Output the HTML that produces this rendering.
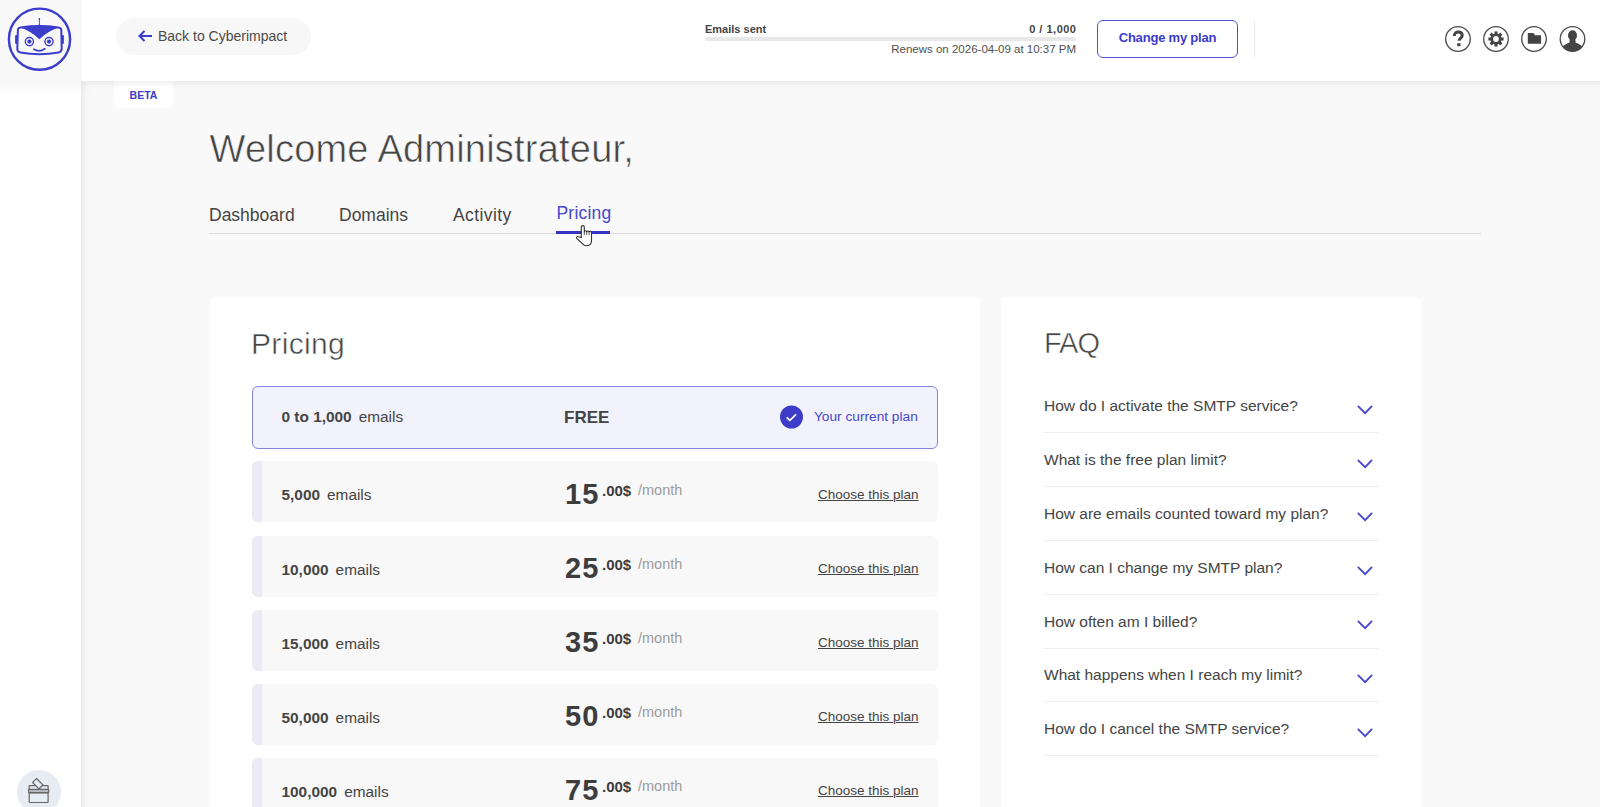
<!DOCTYPE html>
<html><head><meta charset="utf-8">
<style>
*{box-sizing:border-box;margin:0;padding:0}
html,body{width:1600px;height:807px;overflow:hidden;background:#f9f9f9;font-family:"Liberation Sans",sans-serif;color:#444}
.abs{position:absolute}
.t{position:absolute;white-space:nowrap;line-height:1}
#side{left:0;top:0;width:81px;height:807px;background:#fff}
#logoarea{left:0;top:0;width:81px;height:81px;background:#f8f8f8}
#logoshadow{left:0;top:81px;width:81px;height:13px;background:linear-gradient(#f6f6f6,#fff)}
#header{left:82px;top:0;width:1518px;height:81px;background:#fff}
#main{left:81px;top:81px;width:1519px;height:726px;background:#f9f9f9}
#mainshadow{left:81px;top:81px;width:1519px;height:726px;box-shadow:inset 7px 7px 10px -7px rgba(0,0,0,0.12)}
#back{left:116px;top:18px;width:195px;height:37px;border-radius:19px;background:#f7f7f7}
#btn{left:1097px;top:20px;width:141px;height:38px;border:1.5px solid #5151d6;border-radius:6px;background:#fff}
.hicon{position:absolute;top:26px;width:26px;height:26px}
#beta{left:114px;top:81px;width:59px;height:27px;background:#fff;border-radius:0 0 5px 5px}
.card{position:absolute;background:#fff;border-radius:5px}
.row{position:absolute;left:252px;width:686px;height:61.3px;background:#f8f8f8;border-radius:6px;overflow:hidden}
.row .bar{position:absolute;left:0;top:0;width:10px;height:100%;background:#ebebf5}
.faqline{position:absolute;left:1044px;width:335px;height:1px;background:#efefef}
</style></head>
<body>
<div id="side" class="abs"></div>
<div id="logoarea" class="abs"></div>
<div id="logoshadow" class="abs"></div>
<div id="header" class="abs"></div>
<div id="main" class="abs"></div>

<!-- logo -->
<svg class="abs" style="left:0;top:0" width="80" height="80" viewBox="0 0 80 80">
  <g fill="none" stroke="#3d3dcc">
    <circle cx="39.5" cy="39.2" r="30.6" stroke-width="2.4"/>
    <path d="M17.9 30.2Q17.7 27.8 20.6 27.4Q39.4 24.6 58.4 27.4Q61.3 27.8 61.3 30.2L61.7 48.6Q61.8 51.9 58.6 52.5Q39.4 56 20.4 52.5Q17.2 51.9 17.3 48.6Z" stroke-width="2"/>
    <circle cx="29.4" cy="41.6" r="4.1" stroke-width="1.4"/>
    <circle cx="49" cy="41.6" r="4.1" stroke-width="1.4"/>
    <path d="M33.9 49.2Q39.4 52.6 44.8 48.8" stroke-width="1.7" stroke-linecap="round"/>
    <path d="M39.4 18.5V25" stroke-width="0.9"/>
  </g>
  <g fill="#3d3dcc">
    <path d="M19.5 27.5Q39.4 24.6 59.5 27.5Q48.5 30.5 39.4 39.2Q30.3 30.5 19.5 27.5Z"/>
    <path d="M37.8 26Q39.4 23.2 41 26Z"/>
    <ellipse cx="39.4" cy="19" rx="0.8" ry="1.1"/>
    <circle cx="29.4" cy="41.6" r="2.1"/>
    <circle cx="49" cy="41.6" r="2.1"/>
    <rect x="15.1" y="35.1" width="2.6" height="8.8" rx="0.8"/>
    <rect x="61.3" y="35.1" width="2.6" height="8.8" rx="0.8"/>
  </g>
</svg>

<!-- header -->
<div id="back" class="abs"></div>
<svg class="abs" style="left:137px;top:29px" width="16" height="14" viewBox="0 0 16 14"><path d="M15 7H2.5M7.5 2L2.5 7L7.5 12" fill="none" stroke="#3b3bcc" stroke-width="2"/></svg>
<div class="t" style="left:158px;top:29px;font-size:14px;color:#4a4a4a">Back to Cyberimpact</div>

<div class="t" style="left:705px;top:24px;font-size:11px;font-weight:bold;color:#444">Emails sent</div>
<div class="t" style="left:990px;top:24px;width:86px;text-align:right;font-size:11px;font-weight:bold;color:#444;letter-spacing:0.5px;margin-left:0.5px">0 / 1,000</div>
<div class="abs" style="left:705px;top:37px;width:371px;height:3.5px;border-radius:2px;background:#e8e8e8"></div>
<div class="t" style="left:860px;top:44px;width:216px;text-align:right;font-size:11.5px;color:#505050">Renews on 2026-04-09 at 10:37 PM</div>

<div id="btn" class="abs"></div>
<div class="t" style="left:1097px;top:31px;width:141px;text-align:center;font-size:13px;font-weight:bold;color:#3b3bcc;letter-spacing:-0.2px">Change my plan</div>
<div class="abs" style="left:1254px;top:20px;width:1px;height:37px;background:#e8e8e8"></div>

<!-- header icons -->
<svg class="abs" style="left:1444px;top:25px" width="28" height="28" viewBox="0 0 28 28">
  <circle cx="14" cy="14" r="12.3" fill="none" stroke="#4a4a4a" stroke-width="1.3"/>
  <path d="M10.3 10.9c0-2.5 1.7-3.9 4-3.9c2.3 0 3.9 1.4 3.9 3.4c0 2.5-3.2 2.8-3.2 5.4" fill="none" stroke="#444" stroke-width="3"/>
  <rect x="13.2" y="18.2" width="3.3" height="3" fill="#444"/>
</svg>
<svg class="abs" style="left:1482px;top:25px" width="28" height="28" viewBox="0 0 28 28">
  <circle cx="14" cy="14" r="12.3" fill="none" stroke="#4a4a4a" stroke-width="1.3"/>
  <g fill="#444" transform="translate(14 14)">
    <circle r="5.6"/>
    <g id="teeth"><rect x="-1.5" y="-7.6" width="3" height="3"/><rect x="-1.5" y="4.6" width="3" height="3"/><rect x="-7.6" y="-1.5" width="3" height="3"/><rect x="4.6" y="-1.5" width="3" height="3"/></g>
    <g transform="rotate(45)"><rect x="-1.5" y="-7.6" width="3" height="3"/><rect x="-1.5" y="4.6" width="3" height="3"/><rect x="-7.6" y="-1.5" width="3" height="3"/><rect x="4.6" y="-1.5" width="3" height="3"/></g>
  </g>
  <circle cx="14" cy="14" r="2.9" fill="#fff"/>
</svg>
<svg class="abs" style="left:1520px;top:25px" width="28" height="28" viewBox="0 0 28 28">
  <circle cx="14" cy="14" r="12.3" fill="none" stroke="#4a4a4a" stroke-width="1.3"/>
  <path d="M7.8 8.1h5.6l1.6 2.1h6.1v8.5H7.8z" fill="#444"/>
</svg>
<svg class="abs" style="left:1558px;top:25px" width="28" height="28" viewBox="0 0 28 28">
  <defs><clipPath id="cc"><circle cx="14.5" cy="14" r="12.3"/></clipPath></defs>
  <g clip-path="url(#cc)" fill="#444">
    <ellipse cx="14.5" cy="10.4" rx="4.5" ry="5.1"/>
    <path d="M11.8 13.2h5.4l0.5 5h-6.4z"/>
    <ellipse cx="14.5" cy="26.5" rx="11.5" ry="9.2"/>
  </g>
  <circle cx="14.5" cy="14" r="12.3" fill="none" stroke="#4a4a4a" stroke-width="1.3"/>
</svg>

<!-- beta -->
<div id="beta" class="abs"></div>
<div class="t" style="left:114px;top:90px;width:59px;text-align:center;font-size:10.5px;font-weight:bold;color:#3b3bcc">BETA</div>
<div id="mainshadow" class="abs"></div>

<!-- welcome -->
<div class="t" style="left:209.5px;top:130px;font-size:38px;color:#444;letter-spacing:0.22px;-webkit-text-stroke:0.6px #f9f9f9">Welcome Administrateur,</div>

<!-- tabs -->
<div class="t" style="left:209px;top:207px;font-size:17.5px;color:#444">Dashboard</div>
<div class="t" style="left:339px;top:207px;font-size:17.5px;color:#444">Domains</div>
<div class="t" style="left:453px;top:207px;font-size:17.5px;color:#444;letter-spacing:0.4px">Activity</div>
<div class="t" style="left:556.5px;top:205px;font-size:17.5px;color:#4747cf;letter-spacing:0.2px">Pricing</div>
<div class="abs" style="left:209px;top:233px;width:1272px;height:1px;background:#dcdcdc"></div>
<div class="abs" style="left:556px;top:231px;width:54px;height:3px;background:#3535c4"></div>

<!-- pricing card -->
<div class="card" style="left:210px;top:297px;width:770px;height:520px"></div>
<div class="t" style="left:251px;top:328.5px;font-size:30px;color:#444;letter-spacing:0.35px;-webkit-text-stroke:0.5px #fff">Pricing</div>

<div class="abs" style="left:252px;top:386px;width:686px;height:62.5px;background:#f2f2fc;border:1.8px solid #8585e0;border-radius:6px"></div>
<div class="t" style="left:281.5px;top:409px;font-size:15.4px;color:#444"><b>0 to 1,000</b><span style="margin-left:7px">emails</span></div>
<div class="t" style="left:564px;top:408.5px;font-size:17px;font-weight:bold;color:#444">FREE</div>
<svg class="abs" style="left:780px;top:405px" width="23" height="24" viewBox="0 0 23 24"><circle cx="11.5" cy="12" r="11.5" fill="#3c3cc8"/><path d="M6.7 12.3l3.2 3.1l6.1-6.1" fill="none" stroke="#fff" stroke-width="1.7"/></svg>
<div class="t" style="left:814px;top:410px;font-size:13.7px;color:#4747cf">Your current plan</div>

<!-- rows -->
<div class="row" style="top:461px"><div class="bar"></div></div>
<div class="row" style="top:536px"><div class="bar"></div></div>
<div class="row" style="top:610px"><div class="bar"></div></div>
<div class="row" style="top:684px"><div class="bar"></div></div>
<div class="row" style="top:758px"><div class="bar"></div></div>

<div class="t" style="left:281.5px;top:487px;font-size:15.4px;color:#444"><b>5,000</b><span style="margin-left:7px">emails</span></div>
<div class="t" style="left:281.5px;top:562px;font-size:15.4px;color:#444"><b>10,000</b><span style="margin-left:7px">emails</span></div>
<div class="t" style="left:281.5px;top:636px;font-size:15.4px;color:#444"><b>15,000</b><span style="margin-left:7px">emails</span></div>
<div class="t" style="left:281.5px;top:710px;font-size:15.4px;color:#444"><b>50,000</b><span style="margin-left:7px">emails</span></div>
<div class="t" style="left:281.5px;top:784px;font-size:15.4px;color:#444"><b>100,000</b><span style="margin-left:7px">emails</span></div>

<div class="t" style="left:565px;top:480.0px;font-size:29px;font-weight:bold;color:#3d3d3d;letter-spacing:1px">15</div>
<div class="t" style="left:602px;top:482.7px;font-size:15px;font-weight:bold;color:#3d3d3d">.00$</div>
<div class="t" style="left:638px;top:482.5px;font-size:14.5px;color:#9c9c9c">/month</div>
<div class="t" style="left:818px;top:487.9px;font-size:13.5px;color:#444;text-decoration:underline">Choose this plan</div>
<div class="t" style="left:565px;top:554.1px;font-size:29px;font-weight:bold;color:#3d3d3d;letter-spacing:1px">25</div>
<div class="t" style="left:602px;top:556.8px;font-size:15px;font-weight:bold;color:#3d3d3d">.00$</div>
<div class="t" style="left:638px;top:556.6px;font-size:14.5px;color:#9c9c9c">/month</div>
<div class="t" style="left:818px;top:562.0px;font-size:13.5px;color:#444;text-decoration:underline">Choose this plan</div>
<div class="t" style="left:565px;top:628.2px;font-size:29px;font-weight:bold;color:#3d3d3d;letter-spacing:1px">35</div>
<div class="t" style="left:602px;top:630.9px;font-size:15px;font-weight:bold;color:#3d3d3d">.00$</div>
<div class="t" style="left:638px;top:630.7px;font-size:14.5px;color:#9c9c9c">/month</div>
<div class="t" style="left:818px;top:636.1px;font-size:13.5px;color:#444;text-decoration:underline">Choose this plan</div>
<div class="t" style="left:565px;top:702.3px;font-size:29px;font-weight:bold;color:#3d3d3d;letter-spacing:1px">50</div>
<div class="t" style="left:602px;top:705.0px;font-size:15px;font-weight:bold;color:#3d3d3d">.00$</div>
<div class="t" style="left:638px;top:704.8px;font-size:14.5px;color:#9c9c9c">/month</div>
<div class="t" style="left:818px;top:710.2px;font-size:13.5px;color:#444;text-decoration:underline">Choose this plan</div>
<div class="t" style="left:565px;top:776.4px;font-size:29px;font-weight:bold;color:#3d3d3d;letter-spacing:1px">75</div>
<div class="t" style="left:602px;top:779.1px;font-size:15px;font-weight:bold;color:#3d3d3d">.00$</div>
<div class="t" style="left:638px;top:778.9px;font-size:14.5px;color:#9c9c9c">/month</div>
<div class="t" style="left:818px;top:784.3px;font-size:13.5px;color:#444;text-decoration:underline">Choose this plan</div>

<!-- faq card -->
<div class="card" style="left:1001px;top:297px;width:420px;height:520px"></div>
<div class="t" style="left:1044px;top:328.5px;font-size:29px;color:#444;letter-spacing:-1px;-webkit-text-stroke:0.5px #fff">FAQ</div>

<div class="t" style="left:1044px;top:398.3px;font-size:15.5px;color:#444">How do I activate the SMTP service?</div>
<svg class="abs" style="left:1356px;top:404.8px" width="18" height="10" viewBox="0 0 18 10"><path d="M2.3 1.4L9.1 8.2L15.6 1.4" fill="none" stroke="#4444cc" stroke-width="1.8" stroke-linecap="round"/></svg>
<div class="faqline" style="top:432.4px"></div>
<div class="t" style="left:1044px;top:452.1px;font-size:15.5px;color:#444">What is the free plan limit?</div>
<svg class="abs" style="left:1356px;top:458.6px" width="18" height="10" viewBox="0 0 18 10"><path d="M2.3 1.4L9.1 8.2L15.6 1.4" fill="none" stroke="#4444cc" stroke-width="1.8" stroke-linecap="round"/></svg>
<div class="faqline" style="top:486.2px"></div>
<div class="t" style="left:1044px;top:505.9px;font-size:15.5px;color:#444">How are emails counted toward my plan?</div>
<svg class="abs" style="left:1356px;top:512.4px" width="18" height="10" viewBox="0 0 18 10"><path d="M2.3 1.4L9.1 8.2L15.6 1.4" fill="none" stroke="#4444cc" stroke-width="1.8" stroke-linecap="round"/></svg>
<div class="faqline" style="top:540.0px"></div>
<div class="t" style="left:1044px;top:559.7px;font-size:15.5px;color:#444">How can I change my SMTP plan?</div>
<svg class="abs" style="left:1356px;top:566.2px" width="18" height="10" viewBox="0 0 18 10"><path d="M2.3 1.4L9.1 8.2L15.6 1.4" fill="none" stroke="#4444cc" stroke-width="1.8" stroke-linecap="round"/></svg>
<div class="faqline" style="top:593.8px"></div>
<div class="t" style="left:1044px;top:613.5px;font-size:15.5px;color:#444">How often am I billed?</div>
<svg class="abs" style="left:1356px;top:620.0px" width="18" height="10" viewBox="0 0 18 10"><path d="M2.3 1.4L9.1 8.2L15.6 1.4" fill="none" stroke="#4444cc" stroke-width="1.8" stroke-linecap="round"/></svg>
<div class="faqline" style="top:647.6px"></div>
<div class="t" style="left:1044px;top:667.3px;font-size:15.5px;color:#444">What happens when I reach my limit?</div>
<svg class="abs" style="left:1356px;top:673.8px" width="18" height="10" viewBox="0 0 18 10"><path d="M2.3 1.4L9.1 8.2L15.6 1.4" fill="none" stroke="#4444cc" stroke-width="1.8" stroke-linecap="round"/></svg>
<div class="faqline" style="top:701.4px"></div>
<div class="t" style="left:1044px;top:721.1px;font-size:15.5px;color:#444">How do I cancel the SMTP service?</div>
<svg class="abs" style="left:1356px;top:727.6px" width="18" height="10" viewBox="0 0 18 10"><path d="M2.3 1.4L9.1 8.2L15.6 1.4" fill="none" stroke="#4444cc" stroke-width="1.8" stroke-linecap="round"/></svg>
<div class="faqline" style="top:755.2px"></div>

<!-- cursor -->
<svg class="abs" style="left:574px;top:223px" width="22" height="26" viewBox="0 0 22 26">
<path d="M7.3 14.4V4.1a1.5 1.5 0 0 1 3 0V8.9a1.2 1.2 0 0 1 2.4 0.2a1.2 1.2 0 0 1 2.4 0.2a1.2 1.2 0 0 1 2.4 0.5V17.8c0 2.8-1.8 4.9-4.8 4.9c-2.2 0-3.3-0.8-4.6-2.4L2.8 15.3c-0.8-0.8 0.2-2.2 1.4-1.6Z" fill="#fff" stroke="#333" stroke-width="1.1" stroke-linejoin="round"/>
<path d="M10.3 9V12.2M12.7 9.3V12.2M15.1 9.6V12.2" stroke="#333" stroke-width="0.8"/>
</svg>
<!-- sidebar bottom -->
<div class="abs" style="left:17px;top:769.5px;width:44px;height:44px;border-radius:50%;background:#e6ecf2"></div>
<svg class="abs" style="left:24px;top:774px" width="30" height="33" viewBox="0 0 30 33">
<g fill="none" stroke="#666" stroke-width="1.2">
<rect x="5.2" y="11.6" width="18.9" height="7" rx="0.5"/>
<rect x="4.6" y="15.3" width="20.1" height="3.3" rx="0.5" fill="#b5b9bf"/>
<rect x="5.2" y="18.6" width="18.9" height="9.9" rx="0.5"/>
<path d="M12.5 4.5L19 11L15 14.8L8.6 8.4Z" fill="#e6ecf2"/>
</g>
</svg>
</body></html>
